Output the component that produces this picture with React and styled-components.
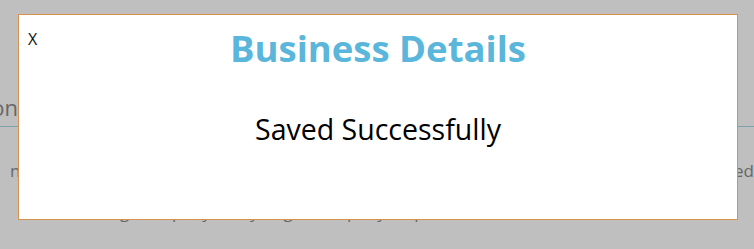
import React from "react"
import styled, { createGlobalStyle } from "styled-components"

const GlobalStyle = createGlobalStyle`
  html, body {
    margin: 0;
    padding: 0;
    background: #ffffff;
    font-family: "Open Sans", "Liberation Sans", sans-serif;
    overflow: hidden;
  }
`

const Page = styled.div`
  position: relative;
  width: 754px;
  height: 249px;
  overflow: hidden;
  background: #ffffff;
`

const PageContent = styled.div`
  padding-top: 92px;
  color: #8a8a8a;
`

const SectionTitle = styled.div`
  display: flex;
  border-bottom: 1px solid #a8d6e6;
  padding-bottom: 4px;
`

const HeadingText = styled.span`
  margin-left: -302px;
  width: 320px;
  text-align: right;
  white-space: nowrap;
  font-size: 22px;
  line-height: 30px;
`

const Paragraph = styled.div`
  margin-top: 20px;
  display: flex;
  flex-direction: column;
`

const Line = styled.div`
  display: flex;
  justify-content: space-between;
  white-space: nowrap;
  font-size: 17px;
  line-height: 48px;
  margin-left: ${p => p.$shift || 0}px;
  margin-top: ${p => p.$top || 0}px;
`

const Overlay = styled.div`
  position: absolute;
  inset: 0;
  background: rgba(0, 0, 0, 0.25);
`

const Modal = styled.div`
  position: absolute;
  left: 18px;
  top: 14px;
  width: 718px;
  height: 204px;
  background: #ffffff;
  border: 1px solid #d8924e;
  display: flex;
  flex-direction: column;
  align-items: center;
`

const CloseButton = styled.button`
  position: absolute;
  left: 9px;
  top: 14px;
  padding: 0;
  border: none;
  background: none;
  font-family: "Open Sans", "Liberation Sans", sans-serif;
  font-size: 16px;
  line-height: 20px;
  color: #111111;
  cursor: pointer;
`

const Title = styled.h2`
  margin: 9px 0 0 0;
  font-size: 36.5px;
  line-height: 48px;
  font-weight: 700;
  color: #5ab6da;
`

const Message = styled.div`
  margin-top: 38px;
  font-size: 28.5px;
  line-height: 38px;
  color: #000000;
`

export default function App() {
  return (
    <Page>
      <GlobalStyle />
      <PageContent>
        <SectionTitle>
          <HeadingText>Business Information</HeadingText>
        </SectionTitle>
        <Paragraph>
          <Line $shift={10}>
            <span>n</span>
            <span>Please fill in your business information so it can be verified</span>
            <span>ed</span>
          </Line>
          <Line $shift={120} $top={-7}>
            <span>gi company and you get company help</span>
          </Line>
        </Paragraph>
      </PageContent>
      <Overlay />
      <Modal>
        <CloseButton>X</CloseButton>
        <Title>Business Details</Title>
        <Message>Saved Successfully</Message>
      </Modal>
    </Page>
  )
}
